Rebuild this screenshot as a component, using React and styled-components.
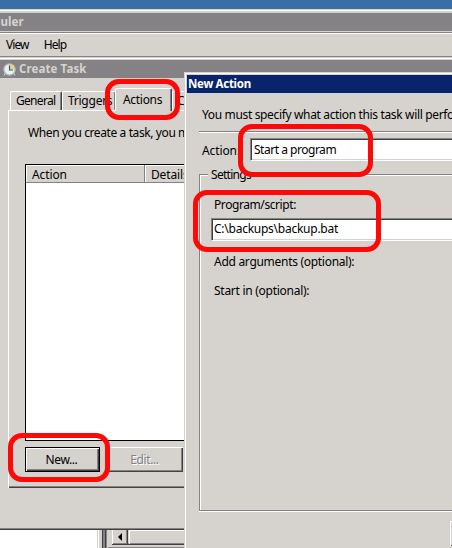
import React from 'react';
import styled, { createGlobalStyle, css } from 'styled-components';

const face = '#d6d3ce';
const gray = '#848284';
const dark = '#424142';

const Global = createGlobalStyle`
  * { box-sizing: border-box; }
  body { margin: 0; overflow: hidden; background: ${face}; }
`;

const Desktop = styled.div`
  position: relative;
  width: 452px;
  height: 548px;
  overflow: hidden;
  background: #3a6ea5;
  padding-top: 9px;
  font: 12px/16px 'Noto Sans', sans-serif;
  color: #000;
  white-space: nowrap;
`;

const Label = styled.span`
  display: block;
  height: 16px;
  letter-spacing: ${(p) => p.$track || 0}px;
`;

const SchedulerWindow = styled.div`
  height: 539px;
  background: ${face};
  border-top: 1px solid ${face};
  box-shadow: inset 0 1px #fff;
  padding-top: 3px;
  display: flex;
  flex-direction: column;
`;

const TitleBar = styled.div`
  display: flex;
  align-items: center;
  flex: none;
  height: 18px;
  background: ${(p) => (p.$active ? '#08246b' : gray)};
  color: ${(p) => (p.$active ? '#fff' : face)};
  font-weight: 700;
  font-size: 11.5px;
  padding-left: ${(p) => p.$pad || 0}px;
  gap: 3px;
`;

const ClippedTitle = styled(Label)`
  margin-left: -34px;
`;

const MenuBar = styled.div`
  display: flex;
  flex: none;
  gap: 15px;
  height: 25px;
  margin-top: 1px;
  padding: 4px 0 0 6px;
  border-top: 1px solid ${gray};
  border-bottom: 1px solid ${gray};
  box-shadow: inset 0 1px #fff;
`;

const LowerPanes = styled.div`
  display: flex;
  margin-top: auto;
  height: 18px;
`;

const TreePane = styled.div`
  width: 99px;
  background: #fff;
  border-right: 1px solid #fff;
  box-shadow: inset -1px 0 ${face};
`;

const Splitter = styled.div`
  width: 9px;
  border-left: 3px solid ${face};
  background: linear-gradient(to right, ${dark} 0 1px, ${gray} 1px 3px, ${dark} 3px 4px, ${gray} 4px 5px, ${face} 5px);
`;

const ScrollPane = styled.div`
  flex: 1;
  padding-left: 4px;
  border-bottom: 1px solid ${gray};
`;

const ScrollBar = styled.div`
  display: flex;
  height: 15px;
  border-bottom: 1px solid ${dark};
  box-shadow: inset 0 -1px ${gray};
`;

const ScrollArrow = styled.div`
  width: 16px;
  display: grid;
  place-items: center;
  border-left: 1px solid #fff;
  border-right: 1px solid ${dark};
  box-shadow: inset -1px 0 ${gray};
`;

const ScrollThumb = styled.div`
  flex: 1;
  border: solid #fff;
  border-width: 1px 0 0 1px;
  margin-left: 1px;
`;

const TaskWindow = styled.div`
  position: absolute;
  left: 0;
  top: 57px;
  width: 452px;
  height: 473px;
  padding-top: 3px;
  background: ${face};
  box-shadow: inset 0 1px ${face}, inset 0 2px #fff, inset 0 -1px ${dark}, inset 0 -2px ${gray};
`;

const Tabs = styled.div`
  display: flex;
  align-items: flex-end;
  height: 32px;
  padding-left: 10px;
`;

const Tab = styled.div`
  width: ${(p) => p.$w}px;
  height: ${(p) => (p.$selected ? 23 : 19)}px;
  padding: ${(p) => (p.$selected ? 3 : 1)}px 0 0 ${(p) => p.$pad || 5}px;
  border: solid;
  border-width: 1px 1px 0;
  border-color: #fff ${dark} #fff #fff;
  border-radius: 2px 2px 0 0;
  box-shadow: inset -1px 0 ${gray};
  background: ${face};
  overflow: hidden;
  ${(p) => p.$selected && css`
    margin: 0 0 -1px -1px;
    z-index: 1;
  `}
`;

const TabPage = styled.div`
  height: 378px;
  margin-left: 8px;
  padding: 14px 0 0 16px;
  border: solid #fff;
  border-width: 1px 0 0 1px;
  box-shadow: inset 0 -1px ${dark}, inset 0 -2px ${gray};
`;

const Intro = styled(Label)`
  margin-left: 3px;
`;

const ActionTable = styled.div`
  height: 277px;
  margin-top: 23px;
  background: #fff;
  border: 1px solid #000;
  border-right: 0;
`;

const TableHead = styled.div`
  display: flex;
  height: 18px;
  background: ${face};
  border-bottom: 1px solid ${gray};
`;

const HeadCell = styled.div`
  width: ${(p) => p.$w}px;
  padding: 2px 0 0 6px;
  border-right: 1px solid ${gray};
  box-shadow: inset 1px 1px #fff;
`;

const Buttons = styled.div`
  display: flex;
  gap: 8px;
  margin-top: 6px;
`;

const Button = styled.div`
  width: 75px;
  height: 25px;
  display: grid;
  place-items: center;
  padding-right: 2px;
  ${(p) => p.$disabled ? css`
    color: ${gray};
    text-shadow: 1px 1px #fff;
    box-shadow: inset 1px 1px #fff, inset -1px -1px ${dark}, inset -2px -2px ${gray};
  ` : css`
    border: 1px solid #000;
    box-shadow: inset 1px 1px #fff, inset -1px -1px ${dark}, inset -2px -2px ${gray};
  `}
`;

const ActionWindow = styled.div`
  position: absolute;
  left: 184px;
  top: 72px;
  width: 268px;
  height: 476px;
  padding: 3px 0 0 3px;
  background: ${face};
  box-shadow: inset 1px 1px ${face}, inset 2px 2px #fff;
`;

const ActionForm = styled.div`
  padding: 14px 0 0 12px;
`;

const Prompt = styled(Label)`
  margin-left: 3px;
`;

const Rule = styled.div`
  height: 2px;
  margin-top: 8px;
  background: #fff;
  border-top: 1px solid ${gray};
`;

const ActionRow = styled.div`
  display: flex;
  align-items: center;
  margin-top: 5px;
  padding-left: 3px;
`;

const ActionName = styled(Label)`
  width: 48px;
  margin-top: 2px;
`;

const Field = styled.div`
  flex: 1;
  height: 23px;
  padding: 3px 0 0 ${(p) => p.$pad}px;
  background: #fff;
  border: solid;
  border-width: 1px 0 1px 1px;
  border-color: ${gray} #fff #fff ${gray};
  box-shadow: inset 1px 1px ${dark}, inset 0 -1px ${face};
`;

const Settings = styled.div`
  display: flex;
  flex-direction: column;
  height: 337px;
  margin-top: 13px;
  padding-left: 11px;
  border: solid ${gray};
  border-width: 1px 0 1px 1px;
  box-shadow: inset 1px 1px #fff, 0 1px #fff;
`;

const Legend = styled(Label)`
  width: 46px;
  margin: -8px 0 0 -3px;
  padding-left: 3px;
  background: ${face};
`;

const FieldLabel = styled(Label)`
  margin: ${(p) => p.$top}px 0 0 3px;
`;

const PathField = styled(Field)`
  flex: none;
  margin-top: 5px;
  padding-top: 2px;
`;

const CornerButton = styled.div`
  width: 75px;
  height: 25px;
  margin: 10px 0 0 251px;
  box-shadow: inset 1px 1px #fff, inset 0 -1px ${dark};
`;

const Highlight = styled.div`
  position: absolute;
  left: ${(p) => p.$x}px;
  top: ${(p) => p.$y}px;
  width: ${(p) => p.$w}px;
  height: ${(p) => p.$h}px;
  border: 5px solid #ff0808;
  border-radius: 14px;
`;

function Clock() {
  return (
    <svg width="13" height="13" viewBox="0 0 13 13">
      <circle cx="6.5" cy="6.5" r="5.6" fill="#e9f1f6" stroke="#b5bcc0" strokeWidth="1.3" />
      <path d="M6.5 6.5V1.2A5.3 5.3 0 0 1 11.8 6.5Z" fill="#f3cd7c" />
      <path d="M6.5 2.5V7H10" fill="none" stroke="#3a5878" strokeWidth="1.2" />
      <path d="M2 10.5l-1 2M11 10.5l1 2" stroke="#d4d8da" />
    </svg>
  );
}

export default function App() {
  return (
    <>
      <Global />
      <Desktop>
        <SchedulerWindow>
          <TitleBar><ClippedTitle $track={0.1}>Scheduler</ClippedTitle></TitleBar>
          <MenuBar><Label $track={-0.9}>View</Label><Label $track={-0.9}>Help</Label></MenuBar>
          <LowerPanes>
            <TreePane />
            <Splitter />
            <ScrollPane>
              <ScrollBar>
                <ScrollArrow>
                  <svg width="4" height="8" viewBox="0 0 4 8"><path d="M4 0V8L0 4Z" /></svg>
                </ScrollArrow>
                <ScrollThumb />
              </ScrollBar>
            </ScrollPane>
          </LowerPanes>
        </SchedulerWindow>

        <TaskWindow>
          <TitleBar $pad={3}><Clock /><Label $track={0.1}>Create Task</Label></TitleBar>
          <Tabs>
            <Tab $w={52}><Label $track={-0.7}>General</Label></Tab>
            <Tab $w={54}><Label $track={-0.25}>Triggers</Label></Tab>
            <Tab $w={57} $selected $pad={7}><Label $track={-0.3}>Actions</Label></Tab>
            <Tab $w={70} $pad={4}><Label $track={-0.3}>Conditions</Label></Tab>
          </Tabs>
          <TabPage>
            <Intro $track={-0.4}>When you create a task, you must specify the action</Intro>
            <ActionTable>
              <TableHead>
                <HeadCell $w={119}><Label $track={-0.1}>Action</Label></HeadCell>
                <HeadCell $w={290}><Label $track={-0.15}>Details</Label></HeadCell>
              </TableHead>
            </ActionTable>
            <Buttons>
              <Button><Label $track={-0.4}>New...</Label></Button>
              <Button $disabled><Label $track={-0.4}>Edit...</Label></Button>
            </Buttons>
          </TabPage>
        </TaskWindow>

        <ActionWindow>
          <TitleBar $active $pad={1}><Label $track={-0.3}>New Action</Label></TitleBar>
          <ActionForm>
            <Prompt $track={-0.35}>You must specify what action this task will perform.</Prompt>
            <Rule />
            <ActionRow>
              <ActionName $track={-0.1}>Action:</ActionName>
              <Field $pad={3}><Label $track={-0.48}>Start a program</Label></Field>
            </ActionRow>
            <Settings>
              <Legend $track={-0.7}>Settings</Legend>
              <FieldLabel $top={14} $track={-0.42}>Program/script:</FieldLabel>
              <PathField $pad={2}><Label $track={-0.25}>C:\backups\backup.bat</Label></PathField>
              <FieldLabel $top={13} $track={-0.29}>Add arguments (optional):</FieldLabel>
              <FieldLabel $top={13} $track={-0.27}>Start in (optional):</FieldLabel>
            </Settings>
            <CornerButton />
          </ActionForm>
        </ActionWindow>

        <Highlight $x={105} $y={79} $w={75} $h={41} />
        <Highlight $x={238} $y={124} $w={135} $h={53} />
        <Highlight $x={193} $y={190} $w={188} $h={62} />
        <Highlight $x={8} $y={433} $w={102} $h={49} />
      </Desktop>
    </>
  );
}
